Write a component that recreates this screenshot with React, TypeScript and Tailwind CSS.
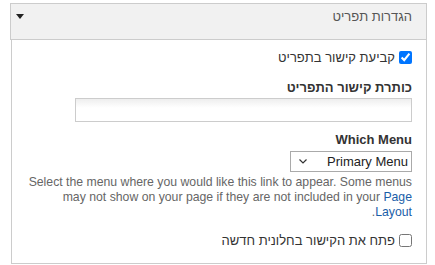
import { useState } from "react";

const App = () => {
  const [showInMenu, setShowInMenu] = useState(true);
  const [newWindow, setNewWindow] = useState(false);

  return (
    <div className="w-[435px] h-[265px] bg-white pt-[3px] font-['Liberation_Sans',Arial,sans-serif] text-[#333]">
      {/* Header */}
      <div
        dir="rtl"
        className="ml-[10px] w-[417px] h-[37px] bg-[#f1f1f1] border border-[#cccccc] flex items-center justify-between pr-[14px] pl-[5px]"
      >
        <span className="text-[13px] text-[#555] -mt-[10px]">הגדרות תפריט</span>
        <svg width="8" height="5" viewBox="0 0 8 5" className="-mt-[10px]">
          <path d="M0 0 L8 0 L4 5 Z" fill="#222" />
        </svg>
      </div>

      {/* Body */}
      <div
        dir="rtl"
        className="ml-[11px] w-[416px] h-[224px] border border-t-0 border-[#cccccc] pr-[14px] pl-[63px] pt-[11px] text-[13px]"
      >
        <label className="flex items-center gap-[4px] h-[13px]">
          <input
            type="checkbox"
            checked={showInMenu}
            onChange={() => setShowInMenu(!showInMenu)}
            className="w-[13px] h-[13px] m-0 accent-[#0075ff]"
          />
          <span className="text-[13px] text-[#333]">קביעת קישור בתפריט</span>
        </label>

        <div className="mt-[16px] font-bold text-[13px] leading-[15px] text-[#333]">
          כותרת קישור התפריט
        </div>
        <input
          type="text"
          className="mt-[3px] block w-[337px] h-[24px] border border-[#cccccc] bg-gradient-to-b from-[#eeeeee] to-white to-[40%] outline-none"
        />

        <div className="mt-[10px] font-bold text-[13px] leading-[15px] text-[#333]" dir="ltr">
          <div className="text-right">Which Menu</div>
        </div>
        <div className="mt-[4px] w-[122px] h-[21px] border border-[#aaaaaa] flex items-center justify-between pr-[3px] pl-[8px]">
          <span className="text-[13px] text-[#222]">Primary Menu</span>
          <svg width="8" height="5" viewBox="0 0 8 5">
            <path d="M0.5 0.5 L4 4 L7.5 0.5" fill="none" stroke="#333" strokeWidth="1.2" />
          </svg>
        </div>

        <p className="mt-[3px] -ml-[48px] text-[12.25px] leading-[15px] text-[#666] text-right">
          Select the menu where you would like this link to appear. Some menus
          may not show on your page if they are not included in your{" "}
          <span className="text-[#1a5ea8]">Page</span>{" "}
          <span className="text-[#1a5ea8]">Layout</span>.
        </p>

        <label className="mt-[14px] flex items-center gap-[4px] h-[13px]">
          <input
            type="checkbox"
            checked={newWindow}
            onChange={() => setNewWindow(!newWindow)}
            className="w-[13px] h-[13px] m-0"
          />
          <span className="text-[13px] text-[#333]">פתח את הקישור בחלונית חדשה</span>
        </label>
      </div>
    </div>
  );
};

export default App;
